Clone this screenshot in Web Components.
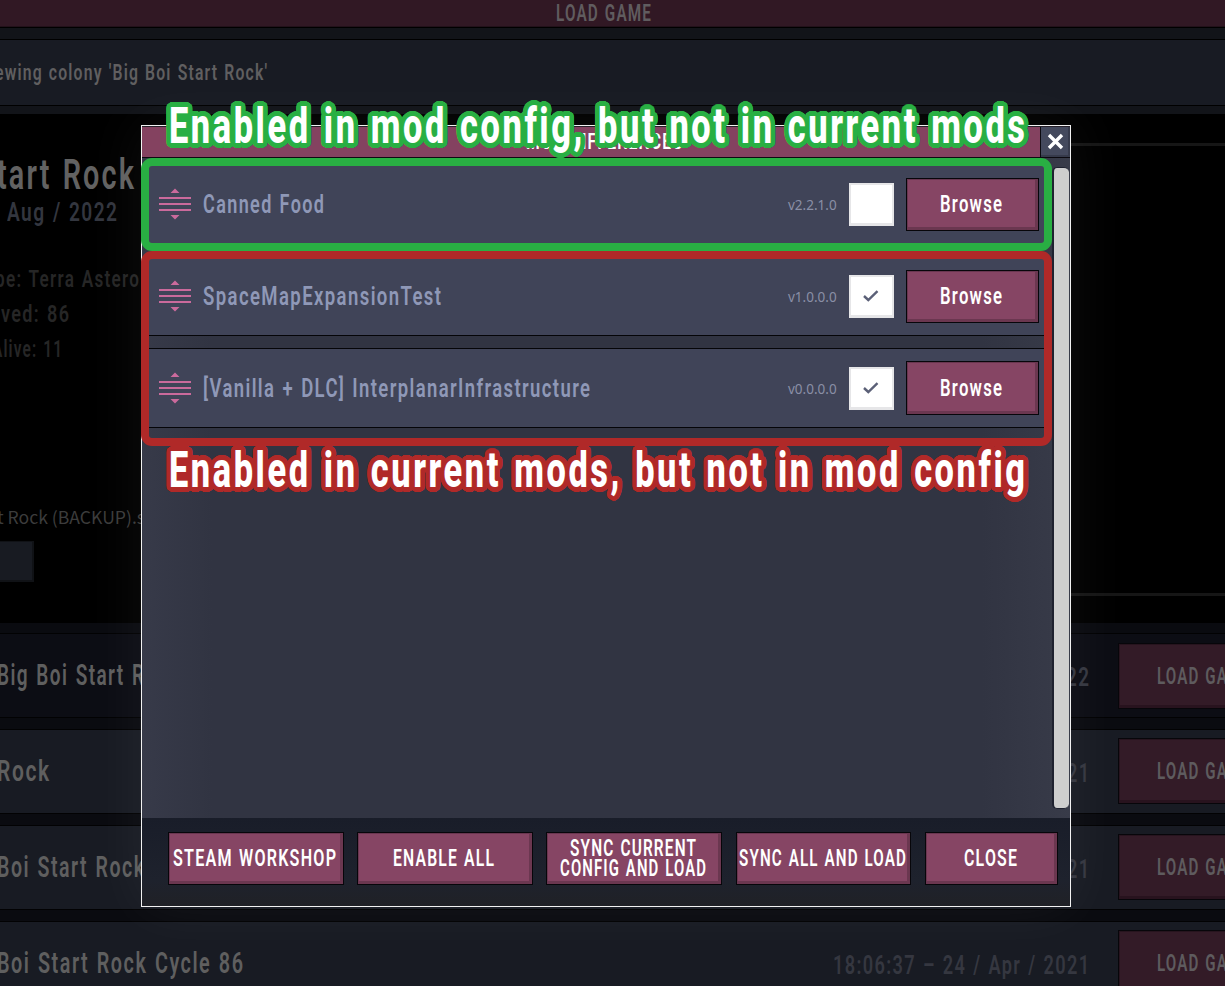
<!DOCTYPE html>
<html lang="en">
<head>
<meta charset="utf-8">
<title>Load Game</title>
<style>
html,body{margin:0;height:100%;overflow:hidden;background:#000;font-family:Roboto,"Noto Sans",sans-serif}
</style>
</head>
<body>
<game-screen></game-screen>
<script>
function define(name, html, setup){
  customElements.define(name, class extends HTMLElement{
    connectedCallback(){
      if(this.shadowRoot) return;
      const t=document.createElement('template');
      t.innerHTML=html;
      this.attachShadow({mode:'open'}).appendChild(t.content.cloneNode(true));
      if(setup) setup.call(this,this.shadowRoot);
    }
  });
}

/* One line of condensed display lettering, fitted to the width in "w". */
define('fit-text',`<style>
:host{display:block;flex:none;white-space:pre;line-height:1;font-family:Roboto,"Noto Sans",sans-serif}
span{display:inline-block;transform-origin:0 50%;white-space:pre;letter-spacing:.075em;word-spacing:.06em}
</style><span><slot></slot></span>`,function(root){
  const s=root.querySelector('span'), w=+this.getAttribute('w'), size=+this.getAttribute('size');
  this.style.width=w+'px';
  this.style.fontSize=size+'px';
  this.style.fontWeight=this.getAttribute('weight')||600;
  const k=w/(s.getBoundingClientRect().width-size*.075);
  s.style.transform='scaleX('+k+')';
  const ring=this.getAttribute('ring');
  if(ring){
    const sh=[];
    for(const r of [4.6,2.5]) for(let i=0;i<32;i++){
      const a=i*Math.PI/16;
      sh.push((Math.cos(a)*r/k).toFixed(2)+'px '+(Math.sin(a)*r).toFixed(2)+'px 0 '+ring);
    }
    s.style.textShadow=sh.join(',');
  }
});

define('game-button',`<style>
:host{display:flex;flex:none;flex-direction:column;align-items:center;justify-content:center;box-sizing:border-box;
border:1px solid #07060a;padding-right:3px;background:#864564;color:#fff;box-shadow:inset 1px 1px 0 #693650,inset -3px -3px 0 #6b3750}
:host([dim]){background:#331b27;color:#5e5b5e;padding:0;box-shadow:inset 1px 1px 0 #27141e,inset -2px -3px 0 #28131e}
</style><slot></slot>`);

define('title-bar',`<style>
:host{display:flex;height:27px;background:#311824;border-bottom:1px solid #22111a;box-shadow:0 1px 0 #000;
align-items:center;color:#605c5f;padding-left:556px;box-sizing:border-box;margin-bottom:1px}
</style><fit-text w="95" size="23">LOAD GAME</fit-text>`);

define('colony-banner',`<style>
:host{display:block;background:#121419;padding:11px 0 8px}
div{height:67px;box-sizing:border-box;border:solid #000;border-width:1px 0;background:#181b23;display:flex;align-items:center;color:#605f60;overflow:hidden}
fit-text{margin-left:-5px}
</style><div><fit-text w="272" size="22.5">ewing colony 'Big Boi Start Rock'</fit-text></div>`);

define('colony-details',`<style>
:host{display:flex;height:509px;background:#000;overflow:hidden}
.col{width:1000px;padding-top:41px;box-sizing:border-box}
.l{display:flex;align-items:center}
.t{height:40px;color:#626262;margin-bottom:3px}
.d{height:28px;color:#33363f;margin-bottom:35px}
.s{height:35px;color:#262626}
.f{height:24px;margin:139px 0 12px;color:#3c3c3c;font:17.6px/24px "Noto Sans CJK SC","Open Sans",sans-serif;white-space:pre;margin-left:-3px}
.b{width:34px;height:41px;box-sizing:border-box;background:#181b22;border:solid #101216;border-width:1px 2px 2px 0}
.p{flex:1;margin:29px -10px 27px 0;border:3px solid #161616}
</style>
<div class="col">
<div class="l t"><fit-text w="137" size="42" style="margin-left:-3px">tart Rock</fit-text></div>
<div class="l d"><fit-text w="110" size="25" style="margin-left:7px">Aug / 2022</fit-text></div>
<div class="l s"><fit-text w="144" size="24" style="margin-left:-5px">pe: Terra Astero</fit-text></div>
<div class="l s"><fit-text w="68" size="24" style="margin-left:1px">ved: 86</fit-text></div>
<div class="l s"><fit-text w="70" size="24" style="margin-left:-8px">Alive: 11</fit-text></div>
<div class="f">t Rock (BACKUP).s</div>
<div class="b"></div>
</div><div class="p"></div>`);

define('save-row',`<style>
:host{display:flex;flex:none;align-items:center;box-sizing:border-box;height:85px;border:solid #020203;border-width:1px 0;
background:#181b23;color:#5f5f5f;overflow:hidden;width:1300px}
:host([dark]){background:#0c0d14}
.name{margin-left:-3px;flex:none;width:600px}
.date{width:492px;display:flex;justify-content:flex-end;color:#353740;position:relative;top:2px}
game-button{width:172px;height:66px;margin-left:29px;position:relative;top:-.5px}
:host([dark]) game-button{top:.5px}
</style><div class="name"><slot name="name"></slot></div><div class="date"><slot name="date"></slot></div>
<game-button dim><fit-text w="94" size="23">LOAD GAME</fit-text></game-button>`);

define('save-list',`<style>
:host{display:flex;flex-direction:column;gap:11px;background:#0a0b10;padding-top:10px;overflow:hidden}
</style>
<save-row dark><fit-text slot="name" w="147" size="29">Big Boi Start R</fit-text><fit-text slot="date" w="23" size="25">22</fit-text></save-row>
<save-row><fit-text slot="name" w="52" size="29">Rock</fit-text><fit-text slot="date" w="22" size="25">21</fit-text></save-row>
<save-row><fit-text slot="name" w="147" size="29">Boi Start Rock</fit-text><fit-text slot="date" w="22" size="25">21</fit-text></save-row>
<save-row><fit-text slot="name" w="246" size="29">Boi Start Rock Cycle 86</fit-text><fit-text slot="date" w="256" size="25">18:06:37 – 24 / Apr / 2021</fit-text></save-row>`);

define('check-box',`<style>
:host{display:flex;flex:none;width:45px;height:43px;box-sizing:border-box;background:#fff;border:solid #e6e6e8;border-width:2px 2px 3px;
align-items:center;justify-content:center}
svg{display:none;margin-right:2px}:host([checked]) svg{display:block}
</style><svg width="16" height="12" viewBox="0 0 16 12"><path d="M1 6 5.3 10 14.5 1.2" fill="none" stroke="#5b6077" stroke-width="2.4"/></svg>`);

define('mod-row',`<style>
:host{display:flex;flex:none;align-items:center;height:80px;box-sizing:border-box;border:solid #050508;border-width:1px 0;background:#404458;
padding:0 5px 0 10px}
svg{flex:none;margin-right:12px}
.n{flex:1;color:#8f98b7}
.v{width:61px;color:#8a8fa6;font:13.5px/20px "Noto Sans",sans-serif;padding-top:1px;box-sizing:border-box}
check-box{margin-right:12px}
game-button{width:133px;height:53px;margin-top:1px}
:host(:last-of-type) game-button{height:54px;margin-top:0}
</style>
<svg width="32" height="32" viewBox="0 0 32 32" fill="#cb6a9c"><path d="M16 .5 20.5 5h-9zM16 31.500 11.500 27h9zM0 9h32v2H0zM0 15h32v2H0zM0 21h32v2H0z"/></svg>
<div class="n"><slot></slot></div><div class="v"></div><check-box></check-box>
<game-button><fit-text w="62" size="23">Browse</fit-text></game-button>`,function(r){
  r.querySelector('.v').textContent=this.getAttribute('version');
  r.querySelector('check-box').toggleAttribute('checked',this.hasAttribute('checked'));
});

define('mod-dialog',`<style>
:host{display:flex;flex-direction:column;box-sizing:border-box;width:930px;height:782px;border:1px solid #f2f2f2;background:#313442;
box-shadow:0 0 55px 2px rgba(255,255,255,.055)}
header{display:flex;height:32px;box-sizing:border-box;border-top:1px solid #262029;border-bottom:1px solid #0c0a10;flex:none}
.t{flex:1;background:#844260;color:#fff;display:flex;align-items:center;justify-content:center;border-right:1px solid #0c0a10}
.t fit-text{margin-left:26px}
.x{width:29px;background:#44495d;display:flex;align-items:center;justify-content:center;box-shadow:inset -2px -2px 0 #363a4b}
.x svg{margin-top:-2px}
main{flex:1;display:flex;background:linear-gradient(90deg,#373a49,#313442 70px,#313442 840px,#383b49)}
.list{width:895px;padding:6px 0 0 7px;display:flex;flex-direction:column;gap:12px}
.bar{width:15px;margin:9px 1px 9px 8px;border:solid #1f2230;border-width:1px 0 1px 2px;border-radius:5px;background:#cecece}
footer{height:88px;box-sizing:border-box;flex:none;display:flex;gap:13px;padding:14px 0 0 26px;background:linear-gradient(#191d29,#1e222d 70%,#202126)}
footer game-button{width:176px;height:53px}
footer game-button:nth-child(3){margin-right:1px}
footer game-button:nth-child(4){width:175px;margin-right:1px}
footer game-button:last-child{width:133px}
</style>
<header><div class="t"><fit-text w="156" size="22">MOD DIFFERENCES</fit-text></div>
<div class="x"><svg width="17" height="17" viewBox="0 0 17 17"><path d="M2 2 15 15M15 2 2 15" stroke="#fff" stroke-width="3.4"/></svg></div></header>
<main><div class="list">
<mod-row version="v2.2.1.0"><fit-text w="121" size="25">Canned Food</fit-text></mod-row>
<mod-row version="v1.0.0.0" checked><fit-text w="238" size="25">SpaceMapExpansionTest</fit-text></mod-row>
<mod-row version="v0.0.0.0" checked><fit-text w="387" size="25">[Vanilla + DLC] InterplanarInfrastructure</fit-text></mod-row>
</div><div class="bar"></div></main>
<footer>
<game-button><fit-text w="163" size="23">STEAM WORKSHOP</fit-text></game-button>
<game-button><fit-text w="101" size="23">ENABLE ALL</fit-text></game-button>
<game-button><fit-text w="126" size="23" style="height:20px;line-height:20px">SYNC CURRENT</fit-text><fit-text w="146" size="23" style="height:20px;line-height:20px">CONFIG AND LOAD</fit-text></game-button>
<game-button><fit-text w="167" size="23">SYNC ALL AND LOAD</fit-text></game-button>
<game-button><fit-text w="53" size="23">CLOSE</fit-text></game-button>
</footer>`);

/* Rounded outline drawn over a group of rows. */
define('mark-frame',`<style>:host{display:block;box-sizing:border-box;border:8px solid;border-radius:11px}</style>`);

define('game-screen',`<style>
:host{display:block;position:relative;width:1225px;height:986px;overflow:hidden;background:#000}
.bg{display:flex;flex-direction:column;height:986px}
save-list{flex:1}
mod-dialog{position:absolute;left:141px;top:125px}
mark-frame{position:absolute;left:141px;width:911px}
.g{top:158px;height:93px;color:#29af43}
.r{top:251px;height:195px;color:#b02928}
.note{position:absolute;left:169px;color:#fff}
.a{top:101px}.b{top:445px}
</style>
<div class="bg"><title-bar></title-bar><colony-banner></colony-banner><colony-details></colony-details><save-list></save-list></div>
<mod-dialog></mod-dialog>
<mark-frame class="g"></mark-frame><mark-frame class="r"></mark-frame>
<fit-text class="note a" w="856" size="50" weight="800" ring="#29af43">Enabled in mod config, but not in current mods</fit-text>
<fit-text class="note b" w="856" size="50" weight="800" ring="#b02928">Enabled in current mods, but not in mod config</fit-text>`);
</script>
</body>
</html>
